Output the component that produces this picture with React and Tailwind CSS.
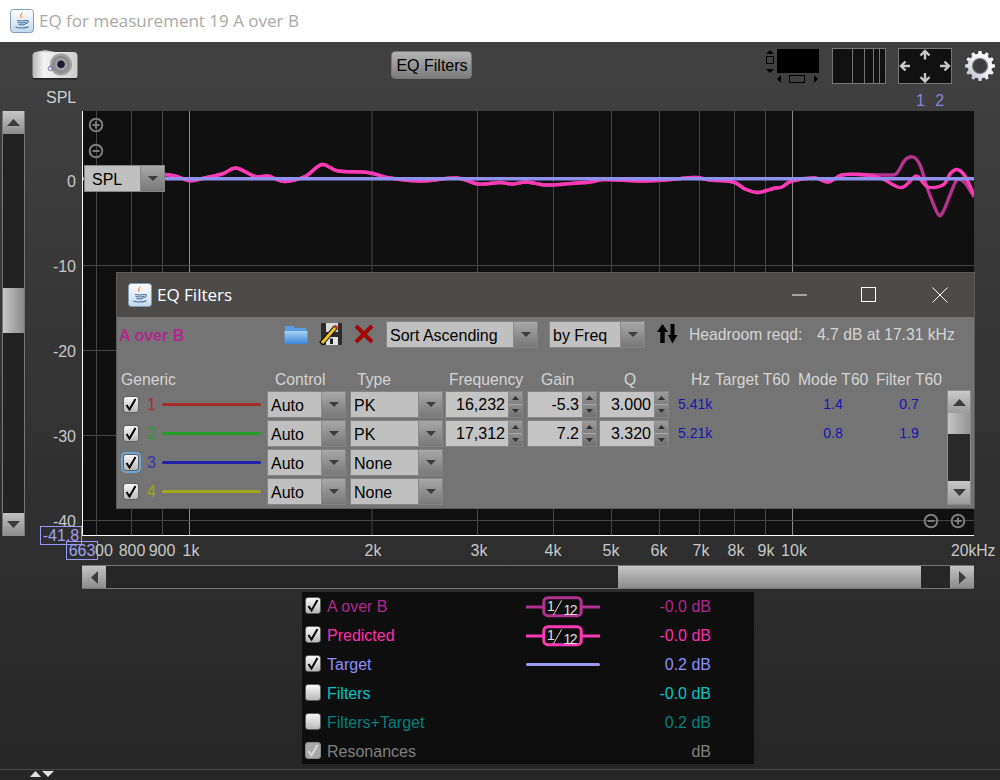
import React from "react";

const smooth = (pts) => {
  let d = `M${pts[0][0]} ${pts[0][1]}`;
  for (let i = 0; i < pts.length - 1; i++) {
    const p0 = pts[Math.max(i - 1, 0)], p1 = pts[i], p2 = pts[i + 1], p3 = pts[Math.min(i + 2, pts.length - 1)];
    const c1 = [p1[0] + (p2[0] - p0[0]) / 6, p1[1] + (p2[1] - p0[1]) / 6];
    const c2 = [p2[0] - (p3[0] - p1[0]) / 6, p2[1] - (p3[1] - p1[1]) / 6];
    d += ` C${c1[0].toFixed(1)} ${c1[1].toFixed(1)} ${c2[0].toFixed(1)} ${c2[1].toFixed(1)} ${p2[0]} ${p2[1]}`;
  }
  return d;
};

const common = [[165,174.5],[175,176],[190,180.7],[200,179],[222,174],[236,168],[255,176.5],[268,176],[285,181.5],[305,176.5],[322,164.5],[338,171],[368,172.5],[390,178],[420,181],[457,178],[478,184],[500,182.5],[512,184],[527,182],[545,185],[565,184],[590,182],[605,179.5],[640,181],[665,180],[695,177.5],[710,180],[733,182],[745,189],[757,192.5],[765,191],[775,188],[782,187],[792,181],[815,178],[828,182],[842,175],[860,174.5]];
const predicted = [...common,[880,178],[898,187],[905,186],[913,178],[918,176.5],[928,187],[943,185],[950,174],[957,169.5],[965,176],[974,195]];
const measured = [...common,[890,175],[897,173],[905,160],[913,157],[920,165],[928,190],[938,214],[943,212],[950,195],[957,180],[965,183],[974,197]];

const dimLines = [96.5,131.5,162.5,372,477.5,553.5,611.5,659.5,699.5,734.5,765.5];
const brightLines = [189.5,792.5];
const hLines = [265.5,350.5,435.5,520.5];
const xLabels = [["00",104],["800",132],["900",162],["1k",191],["2k",373],["3k",479],["4k",553],["5k",611],["6k",659],["7k",701],["8k",736],["9k",766],["10k",794]];

const gearPath = (() => {
  const cx = 15, cy = 15, n = 12, ro = 15, ri = 12.3;
  let d = "";
  for (let i = 0; i < n; i++) {
    const a = (i / n) * Math.PI * 2, w = Math.PI / n;
    const pts = [[ri, a - w * 0.62], [ro, a - w * 0.36], [ro, a + w * 0.36], [ri, a + w * 0.62]];
    pts.forEach(([r, t], j) => {
      d += `${i === 0 && j === 0 ? "M" : "L"}${(cx + r * Math.cos(t)).toFixed(2)} ${(cy + r * Math.sin(t)).toFixed(2)} `;
    });
  }
  return d + "Z";
})();

const JavaIcon = () => (
  <svg width="24" height="24" viewBox="0 0 24 24" className="shrink-0">
    <defs>
      <linearGradient id="jv" x1="0" y1="0" x2="0" y2="1">
        <stop offset="0" stopColor="#ffffff" />
        <stop offset="1" stopColor="#c4d8ea" />
      </linearGradient>
    </defs>
    <rect x="0.5" y="0.5" width="23" height="23" rx="3" fill="url(#jv)" stroke="#7f9db9" />
    <path d="M12 3c1.5 2-2 3-1 5 .4.8 1 1.2 1 1.2-1.5-.6-2.6-1.8-2-3 .5-1.200 1.800-1.800 2-3.200z" fill="#e8761e" />
    <path d="M14 6c-1 .8-1.600 1.500-1 3-.8-.6-1-1.800 1-3z" fill="#e8761e" />
    <path d="M7 11.500c2 .6 8 .6 9.500 0M7.500 13.500c2 .6 7 .6 8.500 0M8.500 15.500c2 .5 5 .5 6.500 0M5.500 18c3 1.300 10 1.300 13-.3M16.500 11.500c2.500-.5 2.500 2.500-1 3.200" fill="none" stroke="#3f6f9f" strokeWidth="1.100" />
  </svg>
);

const Tri = ({ dir = "down", color = "#444", w = 10, h = 6 }) => {
  const p = { down: `0,0 ${w},0 ${w / 2},${h}`, up: `0,${h} ${w},${h} ${w / 2},0`, left: `${w},0 ${w},${h} 0,${h / 2}`, right: `0,0 0,${h} ${w},${h / 2}` }[dir];
  return (
    <svg width={w} height={h} viewBox={`0 0 ${w} ${h}`} className="block">
      <polygon points={p} fill={color} />
    </svg>
  );
};

const Check = ({ checked = true, focus = false, disabled = false }) => (
  <div className={`relative w-[16px] h-[17px] shrink-0 rounded-[3px] border flex items-center justify-center ${disabled ? "border-[#8a8a8a] bg-[#a8a8a8]" : "border-[#5f5f5f] bg-linear-to-b from-[#fafafa] to-[#b8b8b8]"} ${focus ? "outline-2 outline-[#6fa6d8]" : ""}`}>
    {checked && (
      <svg width="12" height="13" viewBox="0 0 12 13">
        <path d="M1.500 7 L4.500 11.500 L10.500 1" fill="none" stroke={disabled ? "#d6d6d6" : "#000"} strokeWidth="2" />
      </svg>
    )}
  </div>
);

const Combo = ({ label, w, arrow = 24 }) => (
  <div className="flex h-[27px] shrink-0 border border-[#858585] bg-[#c0c0c0]" style={{ width: w }}>
    <div className="flex-1 pl-[3px] pt-[1px] text-[16px] leading-[25px] text-black whitespace-nowrap overflow-hidden">{label}</div>
    <div className="flex items-center justify-center bg-linear-to-b from-[#a8a8a8] to-[#787878] border-l border-[#8a8a8a]" style={{ width: arrow }}>
      <Tri dir="down" color="#3c3c3c" w={10} h={5} />
    </div>
  </div>
);

const Spinner = ({ value, w }) => (
  <div className="flex h-[27px] shrink-0 border border-[#858585] bg-[#c4c4c4]" style={{ width: w }}>
    <div className="flex-1 pr-[3px] text-right text-[16px] leading-[25px] text-black">{value}</div>
    <div className="w-[14px] flex flex-col border-l border-[#8a8a8a]">
      <div className="h-[13px] flex items-center justify-center bg-linear-to-b from-[#9c9c9c] to-[#808080] border-b border-[#a8a8a8]">
        <Tri dir="up" color="#333" w={7} h={4} />
      </div>
      <div className="flex-1 flex items-center justify-center bg-linear-to-b from-[#8c8c8c] to-[#707070]">
        <Tri dir="down" color="#333" w={7} h={4} />
      </div>
    </div>
  </div>
);

const ZoomIcon = ({ plus }) => (
  <svg width="16" height="16" viewBox="0 0 16 16" className="block">
    <circle cx="8" cy="8" r="6.300" fill="none" stroke="#7d7d7d" strokeWidth="2" />
    <rect x="4.500" y="7" width="7" height="2" fill="#7d7d7d" />
    {plus && <rect x="7" y="4.500" width="2" height="7" fill="#7d7d7d" />}
  </svg>
);

const filterRows = [
  { n: "1", c: "#a92c2c", lc: "#a52a2a", type: "PK", f: "16,232", g: "-5.3", q: "3.000", hz: "5.41k", m: "1.4", t: "0.7" },
  { n: "2", c: "#2a9a2a", lc: "#229f22", type: "PK", f: "17,312", g: "7.2", q: "3.320", hz: "5.21k", m: "0.8", t: "1.9" },
  { n: "3", c: "#3434ac", lc: "#2222a8", type: "None", focus: true },
  { n: "4", c: "#a3a320", lc: "#a5a51e", type: "None" },
];

const legend = [
  { name: "A over B", c: "#b2288c", on: true, val: "-0.0 dB", badge: "#b2338f" },
  { name: "Predicted", c: "#ff2fb0", on: true, val: "-0.0 dB", badge: "#ff38b4" },
  { name: "Target", c: "#8f8fff", on: true, val: "0.2 dB", line: "#9a9af0" },
  { name: "Filters", c: "#00c4c4", on: false, val: "-0.0 dB" },
  { name: "Filters+Target", c: "#008080", on: false, val: "0.2 dB" },
  { name: "Resonances", c: "#808080", on: true, disabled: true, val: "dB" },
];

const Badge = ({ color }) => (
  <svg width="74" height="24" viewBox="0 0 74 24" className="block">
    <path d="M0 12H74" stroke={color} strokeWidth="3" />
    <rect x="17.800" y="2.700" width="37.400" height="18" rx="4" fill="#0e0e0e" stroke={color} strokeWidth="3" />
    <text x="21" y="16" fontSize="14" fill="#e0e0e0" fontFamily="Liberation Sans">1</text>
    <path d="M27.300 20 L35.700 5.300" stroke="#dcdcdc" strokeWidth="1" />
    <text x="37.500" y="20" fontSize="14" letterSpacing="-1.500" fill="#e0e0e0" fontFamily="Liberation Sans">12</text>
  </svg>
);

export default function App() {
  return (
    <div className="w-[1000px] h-[780px] overflow-hidden flex flex-col bg-white font-['Liberation_Sans',Arial,sans-serif] text-[16px]">
      {/* OS title bar */}
      <div className="h-[42px] shrink-0 flex items-center pl-[10px] gap-[5px] bg-white">
        <JavaIcon />
        <span className="font-['Open_Sans',sans-serif] text-[17px] text-[#a9a9a9] whitespace-nowrap">EQ for measurement 19 A over B</span>
      </div>

      <div className="relative flex-1 flex flex-col bg-linear-to-b from-[#414141] to-[#262626]">
        {/* Toolbar */}
        <div className="h-[69px] shrink-0 flex items-start">
          <div className="ml-[32px] w-[46px] shrink-0">
            <svg width="46" height="32" viewBox="0 0 46 32" className="block mt-[7px]">
              <defs>
                <linearGradient id="cam" x1="0" y1="0" x2="1" y2="0">
                  <stop offset="0" stopColor="#b4b4b4" />
                  <stop offset="0.25" stopColor="#f4f4f4" />
                  <stop offset="1" stopColor="#cccccc" />
                </linearGradient>
                <radialGradient id="lens">
                  <stop offset="0" stopColor="#20203a" />
                  <stop offset="0.38" stopColor="#30304a" />
                  <stop offset="0.5" stopColor="#a8a8a8" />
                  <stop offset="1" stopColor="#808080" />
                </radialGradient>
              </defs>
              <path d="M3 3 L13 1 L23 3 Z" fill="#c8c8c8" />
              <rect x="0.500" y="3" width="45" height="27" rx="4" fill="url(#cam)" />
              <rect x="1" y="29" width="44" height="1.500" fill="#222" />
              <circle cx="29" cy="15.500" r="11" fill="#a0a0a0" />
              <circle cx="29" cy="15.500" r="8.500" fill="url(#lens)" />
              <circle cx="29" cy="15" r="3.500" fill="#1c1c34" />
              <circle cx="18.500" cy="19.500" r="2.300" fill="none" stroke="#7878a8" strokeWidth="1" />
            </svg>
            <div className="ml-[14px] mt-[8px] text-[#d0d0d0] leading-[18px]">SPL</div>
          </div>
          <button className="ml-[313px] mt-[9px] w-[81px] h-[28px] shrink-0 rounded-[4px] border border-[#777] bg-linear-to-b from-[#b4b4b4] to-[#7c7c7c] text-black text-[16px] leading-[24px] pt-[2px] pl-[1px] text-center whitespace-nowrap">EQ Filters</button>
          <svg width="53" height="36" viewBox="0 0 53 36" className="block ml-[294px] mt-[6px] shrink-0">
            <rect x="11" y="1" width="42" height="24" fill="#000" />
            <polygon points="0,6 8,6 4,2" fill="#000" />
            <rect x="0.500" y="8.500" width="7" height="7" fill="none" stroke="#000" />
            <polygon points="0,21 8,21 4,25" fill="#000" />
            <polygon points="15,27 15,35 11,31" fill="#000" />
            <rect x="23.500" y="27.500" width="15" height="7" fill="none" stroke="#000" />
            <polygon points="48,27 48,35 52,31" fill="#000" />
          </svg>
          <div className="ml-[13px] mt-[6px] w-[54px] h-[36px] shrink-0 flex bg-[#111] border border-[#777]">
            <div className="w-[20px] border-r border-[#777]" />
            <div className="w-[12px] border-r border-[#777]" />
            <div className="w-[9px] border-r border-[#777]" />
            <div className="w-[6px] border-r border-[#777]" />
          </div>
          <div className="ml-[12px] mt-[6px] w-[54px] shrink-0">
            <svg width="54" height="36" viewBox="0 0 54 36" className="block">
              <rect x="0.500" y="0.500" width="53" height="35" fill="#111" stroke="#777" />
              <g fill="none" stroke="#c8c8c8" strokeWidth="2.400">
                <path d="M27 11.500V3M22.500 7.500L27 3l4.500 4.500" />
                <path d="M27 25v8.500M22.500 29L27 33.500 31.500 29" />
                <path d="M3 18h9M7.500 13.500L3 18l4.500 4.500" />
                <path d="M51 18h-9M46.500 13.500L51 18l-4.500 4.500" />
              </g>
            </svg>
            <div className="mt-[8px] text-center pl-[13px] text-[#8686dc] leading-[18px] tracking-[3px] whitespace-nowrap">1 2</div>
          </div>
          <svg width="30" height="30" viewBox="0 0 30 30" className="block ml-[13px] mt-[9px] shrink-0">
            <defs>
              <linearGradient id="gr" x1="1" y1="0" x2="0" y2="1">
                <stop offset="0" stopColor="#ffffff" />
                <stop offset="0.5" stopColor="#f0f0f4" />
                <stop offset="1" stopColor="#b0b0c0" />
              </linearGradient>
            </defs>
            <path d={gearPath} fill="url(#gr)" />
            <circle cx="15" cy="15" r="7.500" fill="#3e3e3e" stroke="#77777f" strokeWidth="1.200" />
          </svg>
        </div>

        {/* Chart row */}
        <div className="h-[425px] shrink-0 flex">
          <div className="ml-[2px] w-[23px] h-[425px] flex flex-col border-x border-[#777] bg-[#222]">
            <div className="h-[23px] flex items-center justify-center bg-linear-to-b from-[#c8c8c8] to-[#8c8c8c]">
              <Tri dir="up" color="#3c3c3c" w={13} h={7} />
            </div>
            <div className="h-[154px]" />
            <div className="h-[45px] bg-linear-to-r from-[#c8c8c8] to-[#8a8a8a]" />
            <div className="flex-1" />
            <div className="h-[23px] flex items-center justify-center bg-linear-to-b from-[#c0c0c0] to-[#8c8c8c]">
              <Tri dir="down" color="#3c3c3c" w={13} h={7} />
            </div>
          </div>
          <div className="w-[46px] ml-[5px] mr-[6px] h-[425px] pt-[28px] text-[#c8c8c8] text-right shrink-0">
            <div className="h-[85px] flex items-center justify-end">0</div>
            <div className="h-[85px] flex items-center justify-end">-10</div>
            <div className="h-[85px] flex items-center justify-end">-20</div>
            <div className="h-[85px] flex items-center justify-end">-30</div>
            <div className="h-[85px] flex items-center justify-end">-40</div>
          </div>
          <div className="relative w-[892px] h-[425px] shrink-0">
            <svg width="892" height="425" viewBox="82 111 892 425" className="block">
              <rect x="82" y="111" width="892" height="425" fill="#101010" />
              {dimLines.map((x) => <path key={x} d={`M${x} 111V536`} stroke="#464646" strokeWidth="1" />)}
              {brightLines.map((x) => <path key={x} d={`M${x} 111V536`} stroke="#8c8c8c" strokeWidth="1" />)}
              {hLines.map((y) => <path key={y} d={`M82 ${y}H974`} stroke="#464646" strokeWidth="1" />)}
              <path d={smooth(measured)} fill="none" stroke="#b5338f" strokeWidth="3.400" />
              <path d={smooth(predicted)} fill="none" stroke="#ff3ab4" strokeWidth="3.400" />
              <path d="M83 178.700H974" stroke="#9090ee" strokeWidth="3.500" />
              <path d="M82.500 111V536" stroke="#fff" strokeWidth="1" />
              <path d="M82 535.500H974" stroke="#fff" strokeWidth="1" />
            </svg>
            <div className="absolute left-[6px] top-[6px]"><ZoomIcon plus /></div>
            <div className="absolute left-[6px] top-[32px]"><ZoomIcon /></div>
            <div className="absolute left-[841px] top-[402px]"><ZoomIcon /></div>
            <div className="absolute left-[868px] top-[402px]"><ZoomIcon plus /></div>
            <div className="absolute left-[2px] top-[54px]">
              <Combo label={<span className="pl-[4px]">SPL</span>} w={81} arrow={24} />
            </div>
            <div className="absolute left-[788px] top-[397px] w-[100px] h-[1px] bg-[#555]" />

            {/* EQ Filters window */}
            <div className="absolute left-[34px] top-[161px] w-[859px] h-[237px] flex flex-col border border-[#5c5c5c] bg-[#747474]">
              <div className="h-[44px] shrink-0 flex items-center bg-[#4c4b49]">
                <div className="ml-[11px]"><JavaIcon /></div>
                <span className="ml-[5px] font-['Open_Sans',sans-serif] text-[17px] text-white whitespace-nowrap">EQ Filters</span>
                <svg width="16" height="16" viewBox="0 0 16 16" className="block ml-[560px] shrink-0"><path d="M0 8H15" stroke="#fff" strokeWidth="1" /></svg>
                <svg width="16" height="16" viewBox="0 0 16 16" className="block ml-[53px] shrink-0"><rect x="0.500" y="0.500" width="14" height="14" fill="none" stroke="#fff" /></svg>
                <svg width="16" height="16" viewBox="0 0 16 16" className="block ml-[55px] shrink-0"><path d="M0.500 0.500L15.500 15.500M15.500 0.500L0.500 15.500" stroke="#fff" strokeWidth="1" /></svg>
              </div>
              <div className="flex items-center h-[26px] mt-[4px] shrink-0">
                <div className="ml-[2px] w-[165px] pt-[3px] font-bold text-[#b0288c]">A over B</div>
                <svg width="24" height="22" viewBox="0 0 24 22" className="block shrink-0">
                  <defs>
                    <linearGradient id="fo" x1="0" y1="0" x2="0" y2="1">
                      <stop offset="0" stopColor="#a8d0f4" />
                      <stop offset="1" stopColor="#3f86d8" />
                    </linearGradient>
                  </defs>
                  <path d="M1 3 h8 l2 2 h11 v5 H1z" fill="#5c9ce0" />
                  <path d="M0.500 8h23v13H0.500z" fill="url(#fo)" />
                </svg>
                <svg width="24" height="24" viewBox="0 0 24 24" className="block ml-[11px] shrink-0">
                  <rect x="2" y="1" width="21" height="22" rx="1" fill="#2c2c2c" />
                  <rect x="7" y="1" width="12" height="9" fill="#d8d8d8" />
                  <rect x="7" y="15" width="12" height="8" fill="#e4e4e4" />
                  <rect x="11" y="16.500" width="3" height="5.500" fill="#222" />
                  <path d="M2 22 L17 5" stroke="#111" strokeWidth="5" />
                  <path d="M3 21 L17 5" stroke="#f2c21e" strokeWidth="3" />
                  <path d="M16 6 l2-2" stroke="#c43030" strokeWidth="3.500" />
                </svg>
                <svg width="20" height="20" viewBox="0 0 20 20" className="block ml-[11px] shrink-0">
                  <path d="M2 2L18 18M18 2L2 18" stroke="#a00808" strokeWidth="4" />
                </svg>
                <div className="ml-[12px]"><Combo label="Sort Ascending" w={152} /></div>
                <div className="ml-[11px]"><Combo label="by Freq" w={96} /></div>
                <svg width="21" height="20" viewBox="0 0 21 20" className="block ml-[12px] shrink-0">
                  <polygon points="0,8 5.500,0 11,8 7.700,8 7.700,19 3.300,19 3.300,8" fill="#000" />
                  <polygon points="11,11 15.500,19.500 20.500,11 17.500,11 17.500,0 13.500,0 13.500,11" fill="#000" />
                </svg>
                <div className="ml-[11px] w-[128px] pt-[1px] text-[15.7px] text-[#d4d4d4] whitespace-nowrap">Headroom reqd:</div>
                <div className="pt-[1px] text-[15.7px] text-[#d4d4d4] whitespace-nowrap">4.7 dB at 17.31 kHz</div>
              </div>
              <div className="flex h-[20px] mt-[22px] pt-[1px] shrink-0 text-[15.7px] text-[#d4d4d4] leading-[20px] whitespace-nowrap">
                <div className="ml-[4px] w-[154px]">Generic</div>
                <div className="w-[82px]">Control</div>
                <div className="w-[92px]">Type</div>
                <div className="w-[92px]">Frequency</div>
                <div className="w-[83px]">Gain</div>
                <div className="w-[67px]">Q</div>
                <div className="w-[24px]">Hz</div>
                <div className="w-[83px]">Target T60</div>
                <div className="w-[78px]">Mode T60</div>
                <div>Filter T60</div>
              </div>
              <div className="flex mt-[1px]">
                <div className="w-[830px] pt-[1px] flex flex-col gap-[2px]">
                  {filterRows.map((r) => (
                    <div key={r.n} className="flex h-[27px] items-center">
                      <div className="ml-[6px]"><Check focus={r.focus} /></div>
                      <div className="ml-[8px] w-[12px]" style={{ color: r.c }}>{r.n}</div>
                      <div className="ml-[3px] w-[99px] h-[3px] rounded-full" style={{ background: r.lc }} />
                      <div className="ml-[6px]"><Combo label="Auto" w={79} /></div>
                      <div className="ml-[4px]"><Combo label={r.type} w={93} /></div>
                      {r.f && (
                        <>
                          <div className="ml-[2px]"><Spinner value={r.f} w={78} /></div>
                          <div className="ml-[4px]"><Spinner value={r.g} w={70} /></div>
                          <div className="ml-[2px]"><Spinner value={r.q} w={70} /></div>
                          <div className="ml-[9px] w-[40px] text-[14px] text-[#1414b4]">{r.hz}</div>
                          <div className="ml-[77px] w-[76px] text-center text-[14px] text-[#1414b4]">{r.m}</div>
                          <div className="w-[76px] text-center text-[14px] text-[#1414b4]">{r.t}</div>
                        </>
                      )}
                    </div>
                  ))}
                </div>
                <div className="w-[24px] h-[115px] flex flex-col border border-[#8c8c8c] bg-[#2a2a2a]">
                  <div className="h-[22px] flex items-center justify-center bg-linear-to-b from-[#cacaca] to-[#9c9c9c]">
                    <Tri dir="up" color="#3c3c3c" w={13} h={7} />
                  </div>
                  <div className="h-[21px] bg-linear-to-r from-[#c4c4c4] to-[#949494]" />
                  <div className="flex-1" />
                  <div className="h-[23px] flex items-center justify-center bg-linear-to-b from-[#c6c6c6] to-[#9c9c9c]">
                    <Tri dir="down" color="#3c3c3c" w={13} h={7} />
                  </div>
                </div>
              </div>
            </div>
          </div>
        </div>

        {/* X axis */}
        <div className="relative h-[29px] shrink-0 text-[#c8c8c8]">
          {xLabels.map(([t, x]) => (
            <span key={t} className="absolute top-[6px] leading-[18px] -translate-x-1/2" style={{ left: x }}>{t}</span>
          ))}
          <span className="absolute top-[6px] leading-[18px] left-[951px] text-[15.7px]">20kHz</span>
          <div className="absolute left-[40px] top-[-10px] w-[42px] h-[19px] border border-[#9a9aff] text-[#a0a0ee] text-center leading-[17px]">-41.8</div>
          <div className="absolute left-[66px] top-[5px] w-[32px] h-[19px] border border-[#9a9aff] text-[#a0a0ee] text-center leading-[17px]">663</div>
        </div>

        {/* Horizontal scrollbar */}
        <div className="ml-[82px] w-[892px] h-[24px] shrink-0 flex border-y border-[#777] bg-[#262626]">
          <div className="w-[24px] flex items-center justify-center bg-linear-to-b from-[#c4c4c4] to-[#8c8c8c]">
            <Tri dir="left" color="#3c3c3c" w={7} h={13} />
          </div>
          <div className="w-[512px]" />
          <div className="w-[303px] bg-linear-to-b from-[#c6c6c6] to-[#8c8c8c]" />
          <div className="flex-1" />
          <div className="w-[24px] flex items-center justify-center bg-linear-to-b from-[#c4c4c4] to-[#8c8c8c]">
            <Tri dir="right" color="#3c3c3c" w={7} h={13} />
          </div>
        </div>

        {/* Legend */}
        <div className="ml-[302px] mt-[3px] w-[452px] h-[172px] shrink-0 flex flex-col bg-[#0e0e0e]">
          {legend.map((l) => (
            <div key={l.name} className="h-[29px] shrink-0 flex items-center">
              <div className="ml-[3px] mb-[2px]"><Check checked={l.on} disabled={l.disabled} /></div>
              <div className="ml-[6px] w-[199px] whitespace-nowrap" style={{ color: l.c }}>{l.name}</div>
              <div className="w-[74px] h-[24px] flex items-center">
                {l.badge && <Badge color={l.badge} />}
                {l.line && <div className="w-[74px] h-[3px] rounded-full" style={{ background: l.line }} />}
              </div>
              <div className="w-[111px] text-right" style={{ color: l.c }}>{l.val}</div>
            </div>
          ))}
        </div>

        {/* Footer */}
        <div className="mt-[5px] flex-1 border-t border-[#4a4a4a]">
          <div className="ml-[30px] mt-[1px] flex gap-[1px]">
            <Tri dir="up" color="#e0e0e0" w={11} h={6} />
            <Tri dir="down" color="#e0e0e0" w={12} h={6} />
          </div>
        </div>
      </div>
    </div>
  );
}
